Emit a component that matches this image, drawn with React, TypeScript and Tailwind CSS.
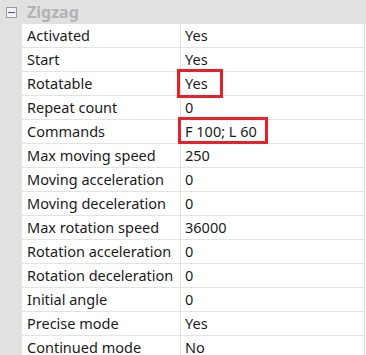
const rows: { name: string; value: string; mark?: "sm" | "lg" }[] = [
  { name: "Activated", value: "Yes" },
  { name: "Start", value: "Yes" },
  { name: "Rotatable", value: "Yes", mark: "sm" },
  { name: "Repeat count", value: "0" },
  { name: "Commands", value: "F 100; L 60", mark: "lg" },
  { name: "Max moving speed", value: "250" },
  { name: "Moving acceleration", value: "0" },
  { name: "Moving deceleration", value: "0" },
  { name: "Max rotation speed", value: "36000" },
  { name: "Rotation acceleration", value: "0" },
  { name: "Rotation deceleration", value: "0" },
  { name: "Initial angle", value: "0" },
  { name: "Precise mode", value: "Yes" },
  { name: "Continued mode", value: "No" },
];

export default function App() {
  return (
    <div
      className="h-[355px] w-[366px] overflow-hidden bg-white text-[14.5px] text-[#1b1b1b]"
      style={{ fontFamily: '"Noto Sans", "Open Sans", sans-serif' }}
    >
      {/* Category header */}
      <div className="flex h-[24px] items-center bg-[#e1e1e1]">
        <div className="flex w-[22px] justify-center">
          <div className="flex h-[11px] w-[11px] items-center justify-center border border-[#9a9a9a] bg-[#f4f4f4]">
            <div className="h-px w-[7px] bg-[#3b5a9a]" />
          </div>
        </div>
        <span className="pl-[5px] text-[16px] font-bold text-[#b3b3b3]">Zigzag</span>
      </div>

      <div className="flex">
        <div className="w-[22px] shrink-0 bg-[#e1e1e1]" />
        <div className="w-[343px] border-r border-[#dcdcdc]">
          {rows.map((r) => (
            <div key={r.name} className="flex h-[24px] border-b border-[#e3e3e3]">
              <div className="flex w-[159px] items-center border-r border-[#e3e3e3] pl-[5px] leading-none">
                {r.name}
              </div>
              <div className="relative flex flex-1 items-center pl-[4px] leading-none">
                {r.value}
                {r.mark === "sm" && (
                  <div className="absolute left-[-4px] top-[-3px] h-[29px] w-[46px] border-[3px] border-[#e8202a]" />
                )}
                {r.mark === "lg" && (
                  <div className="absolute left-[-3px] top-[-3px] h-[27px] w-[90px] border-[3px] border-[#e8202a]" />
                )}
              </div>
            </div>
          ))}
        </div>
      </div>
    </div>
  );
}
